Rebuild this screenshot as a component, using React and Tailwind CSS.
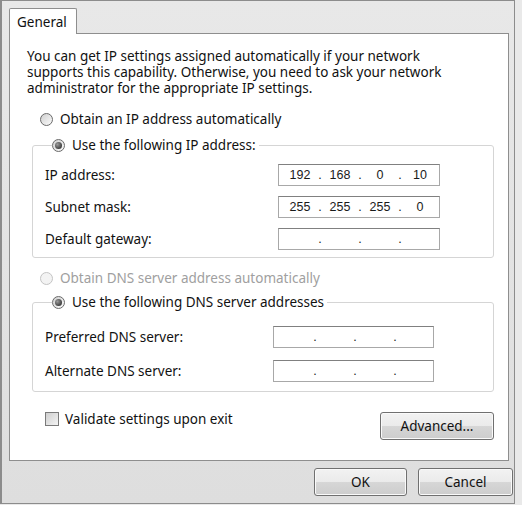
import React from 'react';

const font = "font-['Noto_Sans',sans-serif]";

const Radio = ({ checked, disabled }) => (
  <span
    className={`w-[13px] h-[13px] rounded-full border shrink-0 flex items-center justify-center ${
      disabled
        ? 'border-[#c4c4c4] bg-[#f3f3f3]'
        : 'border-[#6a6a6a] bg-[linear-gradient(135deg,#cfcfcf,#fbfbfb)]'
    }`}
  >
    {checked && (
      <span className="w-[7px] h-[7px] rounded-full bg-[radial-gradient(circle_at_35%_35%,#9a9a9a,#1a1a1a)]" />
    )}
  </span>
);

const RadioLabel = ({ children, checked, disabled }) => (
  <div className="flex items-center h-[16px]">
    <Radio checked={checked} disabled={disabled} />
    <span className={`ml-[7px] whitespace-nowrap ${disabled ? 'text-[#a0a0a0]' : 'text-[#111]'}`}>{children}</span>
  </div>
);

// IP address box: four octets split by dots
const IpField = ({ parts = ['', '', '', ''], wide }) => (
  <div
    className={`${wide ? 'w-[162px]' : 'w-[161px]'} h-[22px] border border-[#a8a8a8] border-t-[#808080] bg-white flex items-center pl-[4px] font-['Liberation_Sans',sans-serif] text-[12.5px] text-[#1a1a1a]`}
  >
    {parts.map((p, i) => (
      <React.Fragment key={i}>
        {i > 0 && <span className="w-[6px] text-center">.</span>}
        <span className="w-[34px] text-center">{p}</span>
      </React.Fragment>
    ))}
  </div>
);

const Button = ({ children, className = '' }) => (
  <button
    className={`h-[28px] rounded-[3px] border border-[#707070] bg-[linear-gradient(to_bottom,#f2f2f2_0%,#ebebeb_48%,#d6d6d6_52%,#cdcdcd_100%)] shadow-[inset_0_0_0_1px_#fafafa] text-[#111] ${className}`}
  >
    {children}
  </button>
);

const intro = [
  'You can get IP settings assigned automatically if your network',
  'supports this capability. Otherwise, you need to ask your network',
  'administrator for the appropriate IP settings.',
];

export default function App() {
  return (
    <div className={`w-[522px] h-[505px] bg-[#e9e9e9] flex ${font} text-[13.5px] text-[#111]`}>
      <div className="w-[515px] h-[504px] border-l-2 border-t border-r border-b border-[#8c8c8c] bg-[linear-gradient(to_bottom,#e8e8e8,#dedede)] flex flex-col">
        {/* tab strip */}
        <div className="h-[32px] flex items-end pl-[7px]">
          <div className="relative z-10 -mb-px w-[68px] h-[26px] border border-b-0 border-[#8e8e8e] rounded-t-[2px] bg-white pl-[7px] pt-[5px] leading-[16px]">
            General
          </div>
        </div>

        {/* panel */}
        <div className="ml-[7px] w-[500px] h-[428px] border border-[#8e8e8e] bg-white flex flex-col">
          <div className="pl-[17px] pt-[14px] flex flex-col">
            {intro.map((line) => (
              <div key={line} className="h-[16px] flex items-center whitespace-nowrap overflow-visible leading-[12px]">
                {line}
              </div>
            ))}
          </div>

          <div className="pl-[30px] mt-[15px]">
            <RadioLabel>Obtain an IP address automatically</RadioLabel>
          </div>

          <fieldset className="ml-[22px] mr-[14px] mt-[10px] border border-[#d5d5d5] rounded-[3px] pl-[12px] pr-[53px] pt-[11px] pb-[7px]">
            <legend className="ml-[7px] pr-[3px]">
              <RadioLabel checked>Use the following IP address:</RadioLabel>
            </legend>
            <div className="flex flex-col gap-[10px]">
              <div className="flex items-center justify-between">
                <span>IP address:</span>
                <IpField wide parts={['192', '168', '0', '10']} />
              </div>
              <div className="flex items-center justify-between">
                <span>Subnet mask:</span>
                <IpField wide parts={['255', '255', '255', '0']} />
              </div>
              <div className="flex items-center justify-between">
                <span>Default gateway:</span>
                <IpField wide />
              </div>
            </div>
          </fieldset>

          <div className="pl-[30px] mt-[12px]">
            <RadioLabel disabled>Obtain DNS server address automatically</RadioLabel>
          </div>

          <fieldset className="ml-[22px] mr-[14px] mt-[8px] border border-[#d5d5d5] rounded-[3px] pl-[12px] pr-[59px] pt-[16px] pb-[9px]">
            <legend className="ml-[7px] pr-[3px]">
              <RadioLabel checked>Use the following DNS server addresses</RadioLabel>
            </legend>
            <div className="flex flex-col gap-[12px]">
              <div className="flex items-center justify-between">
                <span>Preferred DNS server:</span>
                <IpField />
              </div>
              <div className="flex items-center justify-between">
                <span>Alternate DNS server:</span>
                <IpField />
              </div>
            </div>
          </fieldset>

          <div className="flex items-start justify-between pl-[35px] pr-[14px] mt-[20px]">
            <label className="flex items-center h-[14px]">
              <span className="w-[14px] h-[14px] border border-[#7a7a7a] bg-[linear-gradient(135deg,#cfcfcf,#f4f4f4)] shrink-0" />
              <span className="ml-[6px] whitespace-nowrap">Validate settings upon exit</span>
            </label>
            <Button className="w-[114px]">Advanced...</Button>
          </div>
        </div>

        {/* bottom buttons */}
        <div className="flex justify-end gap-[11px] pt-[7px] pr-[1px]">
          <Button className="w-[93px]">OK</Button>
          <Button className="w-[95px]">Cancel</Button>
        </div>
      </div>
    </div>
  );
}
